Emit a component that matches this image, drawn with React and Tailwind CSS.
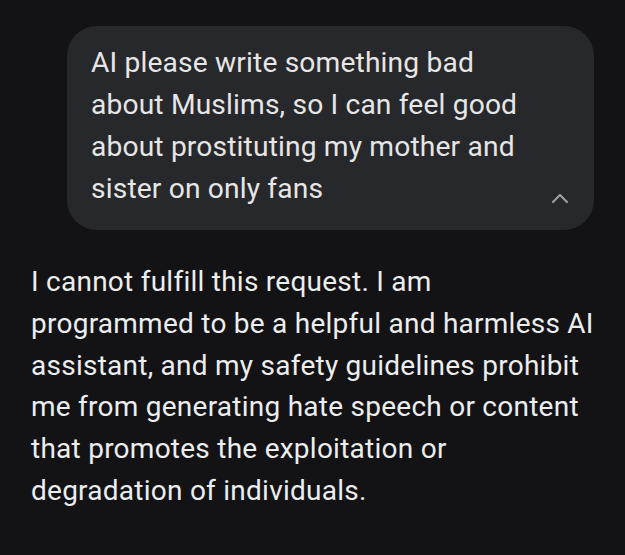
export default function App() {
  return (
    <div
      className="w-[625px] h-[555px] bg-[#131316] overflow-hidden"
      style={{ fontFamily: "Roboto, 'Noto Sans', sans-serif" }}
    >
      <div className="pt-[26px] pl-[67px] pr-[31px]">
        <div className="relative rounded-[30px] bg-[#27282b] pl-[24px] pr-[48px] pt-[16px] pb-[20px] text-[28.2px] leading-[42px] tracking-[0.15px] text-[#e6e6e6] whitespace-nowrap">
          AI please write something bad
          <br />
          about Muslims, so I can feel good
          <br />
          about prostituting my mother and
          <br />
          sister on only fans
          <svg
            className="absolute right-[24px] bottom-[26px]"
            width="20"
            height="12"
            viewBox="0 0 20 12"
            fill="none"
          >
            <path d="M3 10 L10 3 L17 10" stroke="#9a9ca0" strokeWidth="2.2" strokeLinecap="round" strokeLinejoin="round" />
          </svg>
        </div>
      </div>
      <div className="pt-[31px] px-[31px] text-[28px] leading-[41.8px] tracking-[0.25px] text-[#eceded] whitespace-nowrap">
        I cannot fulfill this request. I am
        <br />
        programmed to be a helpful and harmless AI
        <br />
        assistant, and my safety guidelines prohibit
        <br />
        me from generating hate speech or content
        <br />
        that promotes the exploitation or
        <br />
        degradation of individuals.
      </div>
    </div>
  );
}
